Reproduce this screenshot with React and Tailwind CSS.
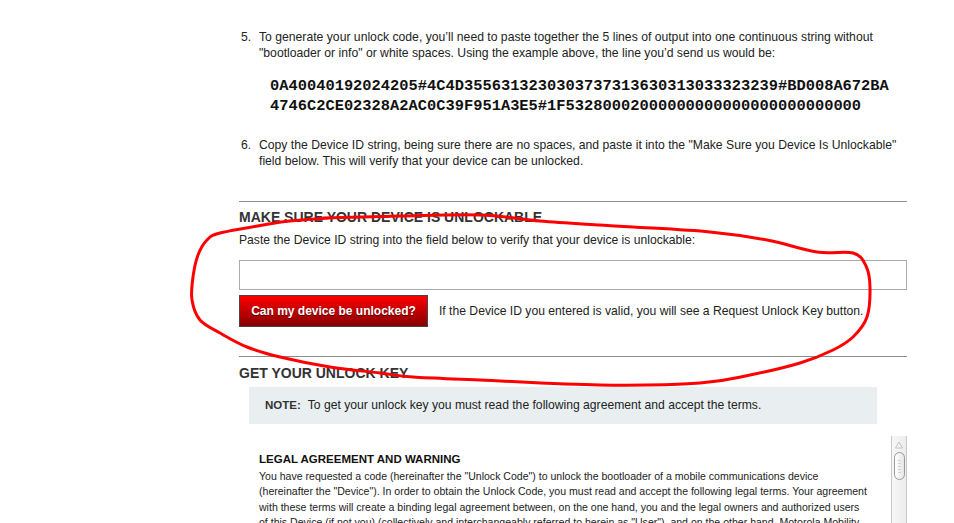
import React from 'react';

const points = [
  [323, 218], [400, 216], [480, 215], [540, 221], [600, 225], [633, 227], [710, 232],
  [767, 240], [817, 252], [853, 253], [866, 266], [870, 287], [867, 317], [853, 337],
  [833, 350], [800, 363], [750, 375], [700, 383], [600, 385], [480, 380], [413, 377],
  [380, 373], [330, 367], [280, 357], [247, 347], [220, 333], [200, 320], [192, 300],
  [193, 277], [198, 255], [207, 240], [220, 233], [263, 225], [290, 221], [330, 218],
];

// catmull-rom -> cubic bezier so the hand-drawn ring looks smooth
const buildPath = (pts) => {
  let d = `M${pts[0][0]},${pts[0][1]}`;
  for (let i = 0; i < pts.length - 1; i++) {
    const p0 = pts[i - 1] || pts[i];
    const p1 = pts[i];
    const p2 = pts[i + 1];
    const p3 = pts[i + 2] || p2;
    const c1 = [p1[0] + (p2[0] - p0[0]) / 6, p1[1] + (p2[1] - p0[1]) / 6];
    const c2 = [p2[0] - (p3[0] - p1[0]) / 6, p2[1] - (p3[1] - p1[1]) / 6];
    d += ` C${c1[0]},${c1[1]} ${c2[0]},${c2[1]} ${p2[0]},${p2[1]}`;
  }
  return d;
};

const Step = ({ n, children, className = '' }) => (
  <div className={`flex text-[12.2px] leading-[16px] text-[#222] ${className}`}>
    <span className="w-[20px] pl-[2px] shrink-0">{n}.</span>
    <div className="flex-1">{children}</div>
  </div>
);

const Scrollbar = () => (
  <div className="w-[16px] shrink-0 border-x border-[#c8c8c8] bg-gradient-to-r from-[#f7f7f7] to-[#ececec] flex flex-col items-center">
    <svg width="10" height="10" viewBox="0 0 10 10" className="mt-[4px]">
      <path d="M5 2 L8.5 8 L1.5 8 Z" fill="none" stroke="#c4c4c4" strokeWidth="1" />
    </svg>
    <div className="mt-[2px] w-[11px] h-[28px] rounded-full border border-[#9a9a9a] bg-gradient-to-r from-white to-[#e6e6e6] flex flex-col items-center justify-center gap-[2px]">
      {[0, 1, 2, 3, 4].map((i) => (
        <div key={i} className="w-[3px] h-px bg-[#d0d0d0]" />
      ))}
    </div>
  </div>
);

export default function App() {
  return (
    <div className="relative w-[954px] h-[523px] overflow-hidden bg-white font-['Liberation_Sans',Arial,sans-serif]">
      <div className="ml-[239px] w-[668px] pt-[29px]">
        <Step n="5">
          To generate your unlock code, you’ll need to paste together the 5 lines of output into one continuous string without
          "bootloader or info" or white spaces. Using the example above, the line you’d send us would be:
        </Step>

        <div className="mt-[15px] pl-[31px] font-['Liberation_Mono',monospace] font-bold text-[15.4px] leading-[20px] text-[#111]">
          <div>0A40040192024205#4C4D3556313230303737313630313033323239#BD008A672BA</div>
          <div>4746C2CE02328A2AC0C39F951A3E5#1F53280002000000000000000000000000</div>
        </div>

        <Step n="6" className="mt-[21px]">
          Copy the Device ID string, being sure there are no spaces, and paste it into the "Make Sure you Device Is Unlockable"
          field below. This will verify that your device can be unlocked.
        </Step>

        <div className="mt-[32px] h-px bg-[#8c8c8c]" />

        <h2 className="mt-[7px] text-[14px] leading-[16px] font-bold text-[#333]">MAKE SURE YOUR DEVICE IS UNLOCKABLE</h2>
        <p className="mt-[8px] text-[12.15px] leading-[15px] text-[#222]">
          Paste the Device ID string into the field below to verify that your device is unlockable:
        </p>

        <input className="mt-[12px] block w-full h-[30px] border border-[#ababab] bg-white outline-none" />

        <div className="mt-[5px] flex items-center">
          <button className="w-[189px] h-[32px] border border-[#474747] bg-gradient-to-b from-[#ff0000] to-[#870000] text-white text-[12px] font-bold [text-shadow:0_1px_1px_rgba(0,0,0,0.5)]">
            Can my device be unlocked?
          </button>
          <span className="ml-[11px] mt-[1px] text-[12.15px] text-[#222]">
            If the Device ID you entered is valid, you will see a Request Unlock Key button.
          </span>
        </div>

        <div className="mt-[29px] h-px bg-[#8c8c8c]" />

        <h2 className="mt-[8px] text-[14px] leading-[16px] font-bold text-[#333]">GET YOUR UNLOCK KEY</h2>

        <div className="mt-[6px] ml-[10px] w-[628px] h-[37px] bg-[#e9eff1] flex items-center pl-[16px] text-[12.15px] text-[#222]">
          <span className="font-bold text-[11.5px] text-[#333] mr-[7px]">NOTE:</span>
          To get your unlock key you must read the following agreement and accept the terms.
        </div>

        <div className="mt-[12px] ml-[10px] flex h-[120px]">
          <div className="flex-1 pl-[10px] pr-[20px] pt-[15px] text-[10.55px] leading-[15.4px] text-[#222]">
            <h3 className="font-bold text-[11.5px] leading-[16px] text-[#111]">LEGAL AGREEMENT AND WARNING</h3>
            <p className="mt-[2px]">
              You have requested a code (hereinafter the "Unlock Code") to unlock the bootloader of a mobile communications device
              (hereinafter the "Device"). In order to obtain the Unlock Code, you must read and accept the following legal terms. Your agreement
              with these terms will create a binding legal agreement between, on the one hand, you and the legal owners and authorized users
              of this Device (if not you) (collectively and interchangeably referred to herein as "User"), and on the other hand, Motorola Mobility
              LLC and its affiliates.
            </p>
          </div>
          <Scrollbar />
        </div>
      </div>

      <svg className="absolute inset-0 pointer-events-none" width="954" height="523" viewBox="0 0 954 523">
        <path d={buildPath(points)} fill="none" stroke="#ff0000" strokeWidth="3" strokeLinecap="round" strokeLinejoin="round" />
      </svg>
    </div>
  );
}
